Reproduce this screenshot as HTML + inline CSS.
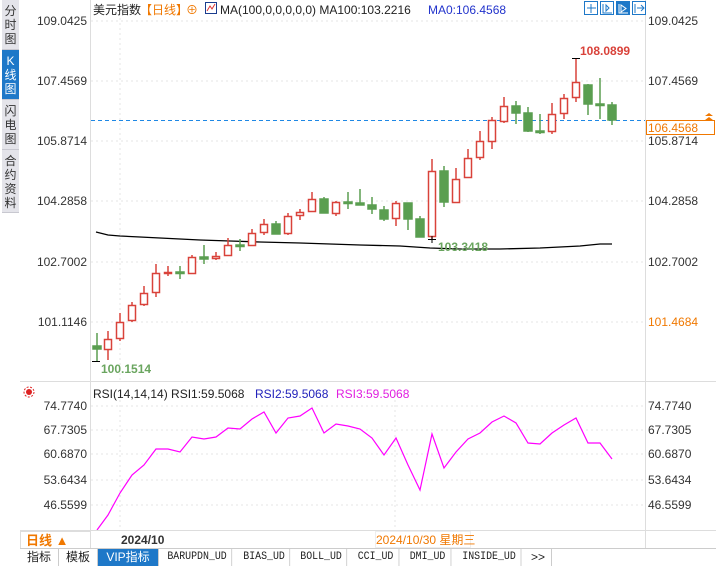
<!DOCTYPE html>
<html><head><meta charset="utf-8"><style>
body{margin:0;width:716px;height:566px;overflow:hidden;background:#fff;font-family:"Liberation Sans","Noto Sans CJK SC",sans-serif;position:relative}
.side{position:absolute;left:2px;width:17px;background:#e4e4ea;color:#333;font-size:12px;line-height:14px;text-align:center;border-bottom:1px solid #c8c8d0;box-sizing:border-box;padding-top:4px}
.tab{position:absolute;top:549px;height:17px;font-size:12px;line-height:17px;border-right:1px solid #ccc;text-align:center;color:#222;background:#fff}
.tab.m{font-family:"Liberation Mono","DejaVu Sans Mono",monospace;font-size:11px;transform:scaleX(.9)}
</style></head><body>
<div class="side" style="top:0;height:50px">分<br>时<br>图</div>
<div class="side" style="top:50px;height:50px;background:#1e78c8;color:#fff">K<br>线<br>图</div>
<div class="side" style="top:100px;height:50px">闪<br>电<br>图</div>
<div class="side" style="top:150px;height:63px">合<br>约<br>资<br>料</div>
<svg width="716" height="566" style="position:absolute;left:0;top:0" font-family="Liberation Sans, Noto Sans CJK SC, sans-serif">
<g stroke="#e6e6e6" stroke-dasharray="2,3">
<line x1="91" y1="21" x2="645" y2="21"/><line x1="91" y1="81" x2="645" y2="81"/><line x1="91" y1="141" x2="645" y2="141"/><line x1="91" y1="201" x2="645" y2="201"/><line x1="91" y1="262" x2="645" y2="262"/><line x1="91" y1="322" x2="645" y2="322"/>
<line x1="120" y1="18" x2="120" y2="380"/><line x1="120" y1="395" x2="120" y2="530"/><line x1="395" y1="395" x2="395" y2="530"/>
<line x1="91" y1="406" x2="645" y2="406"/><line x1="91" y1="430" x2="645" y2="430"/><line x1="91" y1="454" x2="645" y2="454"/><line x1="91" y1="480" x2="645" y2="480"/><line x1="91" y1="505" x2="645" y2="505"/>
</g>
<line x1="90.5" y1="0" x2="90.5" y2="549" stroke="#ddd"/>
<line x1="645.5" y1="0" x2="645.5" y2="549" stroke="#ddd"/>
<line x1="20" y1="381.5" x2="716" y2="381.5" stroke="#ddd"/>
<g font-size="12" fill="#333" text-anchor="end">
<text x="87" y="25">109.0425</text><text x="87" y="85">107.4569</text><text x="87" y="145">105.8714</text><text x="87" y="205">104.2858</text><text x="87" y="266">102.7002</text><text x="87" y="326">101.1146</text>
<text x="87" y="410">74.7740</text><text x="87" y="434">67.7305</text><text x="87" y="458">60.6870</text><text x="87" y="484">53.6434</text><text x="87" y="509">46.5599</text>
</g>
<g font-size="12" fill="#333">
<text x="648" y="25">109.0425</text><text x="648" y="85">107.4569</text><text x="648" y="145">105.8714</text><text x="648" y="205">104.2858</text><text x="648" y="266">102.7002</text><text x="648" y="326" fill="#f07800">101.4684</text>
<text x="648" y="410">74.7740</text><text x="648" y="434">67.7305</text><text x="648" y="458">60.6870</text><text x="648" y="484">53.6434</text><text x="648" y="509">46.5599</text>
</g>
<rect x="646.5" y="120.5" width="68" height="14" fill="#fff" stroke="#f07800"/>
<text x="648" y="132" font-size="12" fill="#f07800">106.4568</text>
<path d="M705 116l4-3 4 3zM705 120l4-3 4 3z" fill="#f07800"/>
<line x1="91" y1="120.5" x2="645" y2="120.5" stroke="#1e88e5" stroke-dasharray="4,3"/>
<polyline fill="none" stroke="#000" stroke-width="1.3" points="96,232 108,235 120,236 140,237 160,238 180,239 200,240 230,241 260,242 300,243 330,244 360,245 400,246 430,248 460,249 500,249 540,248 560,247 580,246 600,244 612,244"/>
<g id="c" stroke-width="1.5">
<g stroke="#5a9e50" fill="#5a9e50">
<line x1="97" y1="333" x2="97" y2="362"/><rect x="93" y="346" width="8" height="3"/>
<line x1="180" y1="266" x2="180" y2="279"/><rect x="176" y="272" width="8" height="1.5"/>
<line x1="204" y1="245" x2="204" y2="264"/><rect x="200" y="257" width="8" height="2"/>
<line x1="240" y1="239" x2="240" y2="251"/><rect x="236" y="245" width="8" height="1.5"/>
<line x1="276" y1="221" x2="276" y2="234"/><rect x="272" y="224" width="8" height="10"/>
<line x1="324" y1="197" x2="324" y2="213"/><rect x="320" y="199" width="8" height="14"/>
<line x1="348" y1="192" x2="348" y2="209"/><rect x="344" y="202" width="8" height="1.5"/>
<line x1="360" y1="189" x2="360" y2="205"/><rect x="356" y="203" width="8" height="2"/>
<line x1="372" y1="197" x2="372" y2="214"/><rect x="368" y="205" width="8" height="4"/>
<line x1="384" y1="206" x2="384" y2="221"/><rect x="380" y="210" width="8" height="9"/>
<line x1="408" y1="203" x2="408" y2="230"/><rect x="404" y="203" width="8" height="16"/>
<line x1="420" y1="216" x2="420" y2="237"/><rect x="416" y="219" width="8" height="18"/>
<line x1="444" y1="166" x2="444" y2="207"/><rect x="440" y="171" width="8" height="31"/>
<line x1="516" y1="101" x2="516" y2="124"/><rect x="512" y="106" width="8" height="7"/>
<line x1="528" y1="107" x2="528" y2="132"/><rect x="524" y="113" width="8" height="18"/>
<line x1="540" y1="114" x2="540" y2="134"/><rect x="536" y="131" width="8" height="1.5"/>
<line x1="588" y1="84" x2="588" y2="115"/><rect x="584" y="85" width="8" height="19"/>
<line x1="600" y1="78" x2="600" y2="119"/><rect x="596" y="104" width="8" height="1.5"/>
<line x1="612" y1="102" x2="612" y2="125"/><rect x="608" y="105" width="8" height="15"/>
</g>
<g stroke="#d9423a" fill="#fff">
<line x1="108" y1="331" x2="108" y2="360"/><rect x="104.5" y="339.5" width="7" height="10"/>
<line x1="120" y1="313" x2="120" y2="341"/><rect x="116.5" y="322.5" width="7" height="16"/>
<line x1="132" y1="302" x2="132" y2="322"/><rect x="128.5" y="305.5" width="7" height="15"/>
<line x1="144" y1="286" x2="144" y2="306"/><rect x="140.5" y="293.5" width="7" height="11"/>
<line x1="156" y1="264" x2="156" y2="297"/><rect x="152.5" y="273.5" width="7" height="19"/>
<line x1="168" y1="266" x2="168" y2="276"/><rect x="164.5" y="272.5" width="7" height="1" fill="#d9423a"/>
<line x1="192" y1="255" x2="192" y2="273"/><rect x="188.5" y="257.5" width="7" height="16"/>
<line x1="216" y1="252" x2="216" y2="260"/><rect x="212.5" y="256.5" width="7" height="2"/>
<line x1="228" y1="238" x2="228" y2="255"/><rect x="224.5" y="245.5" width="7" height="10"/>
<line x1="252" y1="229" x2="252" y2="245"/><rect x="248.5" y="233.5" width="7" height="12"/>
<line x1="264" y1="219" x2="264" y2="235"/><rect x="260.5" y="224.5" width="7" height="8"/>
<line x1="288" y1="213" x2="288" y2="235"/><rect x="284.5" y="216.5" width="7" height="17"/>
<line x1="300" y1="209" x2="300" y2="220"/><rect x="296.5" y="212.5" width="7" height="3"/>
<line x1="312" y1="192" x2="312" y2="211"/><rect x="308.5" y="199.5" width="7" height="12"/>
<line x1="336" y1="201" x2="336" y2="216"/><rect x="332.5" y="202.5" width="7" height="11"/>
<line x1="396" y1="201" x2="396" y2="226"/><rect x="392.5" y="203.5" width="7" height="15"/>
<line x1="432" y1="159" x2="432" y2="240"/><rect x="428.5" y="171.5" width="7" height="65"/>
<line x1="456" y1="168" x2="456" y2="202"/><rect x="452.5" y="179.5" width="7" height="23"/>
<line x1="468" y1="149" x2="468" y2="178"/><rect x="464.5" y="158.5" width="7" height="19"/>
<line x1="480" y1="131" x2="480" y2="160"/><rect x="476.5" y="141.5" width="7" height="16"/>
<line x1="492" y1="117" x2="492" y2="149"/><rect x="488.5" y="120.5" width="7" height="21"/>
<line x1="504" y1="97" x2="504" y2="123"/><rect x="500.5" y="106.5" width="7" height="15"/>
<line x1="552" y1="103" x2="552" y2="134"/><rect x="548.5" y="114.5" width="7" height="17"/>
<line x1="564" y1="94" x2="564" y2="119"/><rect x="560.5" y="98.5" width="7" height="15"/>
<line x1="576" y1="58" x2="576" y2="102"/><rect x="572.5" y="82.5" width="7" height="15"/>
</g>
</g>
<g stroke="#000"><line x1="92" y1="361.5" x2="100" y2="361.5"/><line x1="572" y1="58.5" x2="580" y2="58.5"/><line x1="428" y1="239.5" x2="436" y2="239.5"/><line x1="432" y1="236" x2="432" y2="243"/></g>
<text x="580" y="55" font-size="12" font-weight="bold" fill="#d9423a">108.0899</text>
<text x="101" y="373" font-size="12" font-weight="bold" fill="#6aa55f">100.1514</text>
<text x="438" y="251" font-size="12" font-weight="bold" fill="#6aa55f">103.3418</text>
<polyline fill="none" stroke="#f0f" stroke-width="1.2" points="97,530 108,515 120,493 132,475 144,465 156,449 168,449 180,452 192,437 204,439 216,437 228,428 240,429 252,419 264,412 276,433 288,418 300,416 312,408 324,433 336,424 348,426 360,429 372,438 384,455 396,438 408,465 420,490 432,434 444,468 456,452 468,439 480,433 492,422 504,416 516,423 528,443 540,444 552,433 564,425 576,418 588,443 600,443 612,459"/>
<g font-size="12">
<text x="93" y="14" fill="#222">美元指数</text><text x="140" y="14" fill="#f07800">【日线】</text>
<text x="186" y="14" fill="#f07800">⊕</text>
<rect x="205.5" y="2.5" width="11" height="11" fill="#fff" stroke="#1a3d8f"/><path d="M207 11l3-5 2 3 3-5" fill="none" stroke="#d33"/>
<text x="220" y="14" fill="#222">MA(100,0,0,0,0,0)  MA100:103.2216</text>
<text x="428" y="14" fill="#2233cc">MA0:106.4568</text>
<text x="93" y="398" fill="#222">RSI(14,14,14)  RSI1:59.5068</text>
<text x="255" y="398" fill="#2222bb">RSI2:59.5068</text>
<text x="336" y="398" fill="#e020e0">RSI3:59.5068</text>
</g>
<g fill="none" stroke="#1e78c8">
<rect x="584.5" y="1.5" width="13" height="13" fill="#fff"/><rect x="600.5" y="1.5" width="13" height="13" fill="#fff"/><rect x="616.5" y="1.5" width="13" height="13" fill="#1e78c8"/><rect x="632.5" y="1.5" width="13" height="13" fill="#fff"/>
<path d="M591 4v9M587 8h9M603 4v9h9M606 5v6l3-3z"/><path d="M619 4v9h9M621 5v7l5-3.5z" stroke="#fff"/><path d="M635 4v9M637 8h7M641 5l3 3-3 3"/>
</g>
<g transform="translate(29,392)"><circle r="3" fill="#d22"/><circle r="5" fill="none" stroke="#d22" stroke-dasharray="2,1.5"/></g>
<line x1="20" y1="530.5" x2="716" y2="530.5" stroke="#ddd"/>
<rect x="20.5" y="531.5" width="70" height="17" fill="#fff" stroke="#ddd"/>
<text x="26" y="545" font-size="13" font-weight="bold" fill="#f07800">日线 ▲</text>
<text x="121" y="544" font-size="12" font-weight="bold" fill="#333">2024/10</text>
<rect x="375.5" y="531.5" width="95" height="16" fill="#fff" stroke="#eee"/>
<text x="376" y="544" font-size="12" fill="#f07800">2024/10/30 星期三</text>
<line x1="20" y1="548.5" x2="716" y2="548.5" stroke="#ccc"/>
</svg>
<div class="tab" style="left:20px;width:38px">指标</div>
<div class="tab" style="left:59px;width:38px">模板</div>
<div class="tab" style="left:98px;width:60px;background:#1e78c8;color:#fff">VIP指标</div>
<div class="tab m" style="left:159px;width:76px">BARUPDN_UD</div>
<div class="tab m" style="left:236px;width:56px">BIAS_UD</div>
<div class="tab m" style="left:293px;width:56px">BOLL_UD</div>
<div class="tab m" style="left:350px;width:51px">CCI_UD</div>
<div class="tab m" style="left:402px;width:51px">DMI_UD</div>
<div class="tab m" style="left:454px;width:70px">INSIDE_UD</div>
<div class="tab" style="left:525px;width:26px">&gt;&gt;</div>
</body></html>
